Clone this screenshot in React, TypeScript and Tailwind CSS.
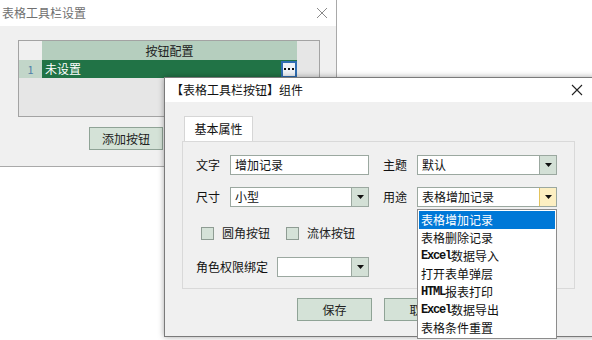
import React from 'react';

const cjk = { fontFamily: '"Noto Sans CJK SC", "Noto Sans", sans-serif' };

const Arrow = () => (
  <svg width="7" height="4" viewBox="0 0 7 4">
    <path d="M0 0H7L3.5 4Z" fill="#111" />
  </svg>
);

const Select = ({ value, width, yellow }: { value: string; width: string; yellow?: boolean }) => (
  <div className={`flex h-[20px] ${width} border border-[#9ba8a0] bg-white`}>
    <div className="flex-1 px-[4px] leading-[18px] text-[12px] text-[#111]">{value}</div>
    <div
      className={`flex w-[17px] items-center justify-center border-l ${
        yellow ? 'border-[#e3c35c] bg-[#fcefc2]' : 'border-[#9ba8a0] bg-[#d3e0d6]'
      }`}
    >
      <Arrow />
    </div>
  </div>
);

const Check = ({ label }: { label: string }) => (
  <div className="flex items-center">
    <div className="h-[13px] w-[13px] border border-[#8e9c93] bg-[#d5e2d8]" />
    <span className="ml-[8px] text-[12px] text-[#222]">{label}</span>
  </div>
);

const Mono = ({ children }: { children: React.ReactNode }) => (
  <span className="text-[12px] font-semibold tracking-[-1.2px]" style={{ fontFamily: '"Liberation Mono", monospace' }}>
    {children}
  </span>
);

const options: React.ReactNode[] = [
  '表格增加记录',
  '表格删除记录',
  <><Mono>Excel</Mono>数据导入</>,
  '打开表单弹层',
  <><Mono>HTML</Mono>报表打印</>,
  <><Mono>Excel</Mono>数据导出</>,
  '表格条件重置',
];

export default function App() {
  return (
    <div className="relative h-[340px] w-[592px] overflow-hidden bg-white" style={cjk}>
      {/* back window */}
      <div className="absolute left-0 top-0 flex h-[167px] w-[337px] flex-col border-b border-r border-[#a9a9a9] bg-[#f0f0f0]">
        <div className="flex h-[26px] items-center justify-between bg-white pl-[2px] pr-[8px]">
          <span className="text-[12px] text-[#707070]">表格工具栏设置</span>
          <svg width="12" height="12" viewBox="0 0 12 12">
            <path d="M1 1L11 11M11 1L1 11" stroke="#8a8a8a" strokeWidth="1" />
          </svg>
        </div>
        <div className="ml-[18px] mt-[14px] flex h-[77px] w-[302px] flex-col border border-[#a3a3a3] bg-[#e6e6e6]">
          <div className="flex h-[19px]">
            <div className="w-[23px] bg-[#f0f0f0]" />
            <div className="flex w-[255px] items-center justify-center bg-[#b5cebe] text-[12px] text-[#222]">按钮配置</div>
            <div className="flex-1 bg-[#e6e6e6]" />
          </div>
          <div className="flex h-[18px]">
            <div className="flex w-[23px] items-center justify-center bg-[#c2d6c9] text-[11px] text-[#4f7fa8]">1</div>
            <div className="flex w-[255px] items-center justify-between bg-[#217346] pl-[3px] text-[12px] text-white">
              <span>未设置</span>
              <div className="flex h-[17px] w-[16px] items-center justify-center border-2 border-[#2f6db2] bg-[#eef2f7]">
                <svg width="10" height="4" viewBox="0 0 10 4">
                  <rect x="0" y="1" width="2" height="2" fill="#111" />
                  <rect x="4" y="1" width="2" height="2" fill="#111" />
                  <rect x="8" y="1" width="2" height="2" fill="#111" />
                </svg>
              </div>
            </div>
            <div className="flex-1" />
          </div>
        </div>
        <div className="ml-[89px] mt-[10px] flex h-[23px] w-[74px] items-center justify-center border border-[#8fa396] bg-[#d4e2d7] text-[12px] text-[#222]">
          添加按钮
        </div>
      </div>

      {/* front dialog */}
      <div className="absolute left-[164px] top-[77px] flex h-[260px] w-[432px] flex-col border border-[#7a7a7a] bg-[#f0f0f0] shadow-[0_0_6px_rgba(0,0,0,0.35)]">
        <div className="flex h-[24px] items-center justify-between bg-white pl-[6px] pr-[12px]">
          <span className="text-[12px] text-[#111]">【表格工具栏按钮】组件</span>
          <svg width="12" height="12" viewBox="0 0 12 12">
            <path d="M1 1L11 11M11 1L1 11" stroke="#222" strokeWidth="1.1" />
          </svg>
        </div>
        <div className="ml-[17px] mt-[14px] flex">
          <div className="ml-[2px] flex h-[25px] w-[69px] items-center justify-center border-x border-t border-[#d6d6d6] bg-white text-[12px] text-[#111]">
            基本属性
          </div>
        </div>
        <div className="ml-[17px] flex h-[148px] w-[393px] flex-col border border-[#d9d9d9] bg-[#f0f0f0] px-[13px] pt-[13px]">
          <div className="flex items-center">
            <span className="w-[34px] text-[12px] text-[#111]">文字</span>
            <div className="h-[20px] w-[139px] border border-[#9ba8a0] bg-white px-[4px] text-[12px] leading-[18px] text-[#111]">增加记录</div>
            <span className="ml-[14px] w-[34px] text-[12px] text-[#111]">主题</span>
            <Select value="默认" width="w-[140px]" />
          </div>
          <div className="mt-[12px] flex items-center">
            <span className="w-[34px] text-[12px] text-[#111]">尺寸</span>
            <Select value="小型" width="w-[139px]" />
            <span className="ml-[14px] w-[34px] text-[12px] text-[#111]">用途</span>
            <Select value="表格增加记录" width="w-[140px]" yellow />
          </div>
          <div className="ml-[5px] mt-[17px] flex items-center gap-[16px]">
            <Check label="圆角按钮" />
            <Check label="流体按钮" />
          </div>
          <div className="mt-[15px] flex items-center">
            <span className="w-[81px] text-[12px] text-[#111]">角色权限绑定</span>
            <Select value="" width="w-[92px]" />
          </div>
        </div>
        <div className="ml-[132px] mt-[9px] flex gap-[12px]">
          <div className="flex h-[23px] w-[75px] items-center justify-center border border-[#8fa396] bg-[#d4e2d7] text-[12px] text-[#222]">保存</div>
          <div className="flex h-[23px] w-[75px] items-center justify-center border border-[#8fa396] bg-[#d4e2d7] text-[12px] text-[#222]">取消</div>
        </div>
      </div>

      {/* dropdown list */}
      <div className="absolute left-[417px] top-[209px] w-[140px] border border-[#8c8c8c] bg-white p-[1px] text-[12px]">
        {options.map((o, i) => (
          <div
            key={i}
            className={`flex h-[18px] items-center pl-[2px] ${i === 0 ? 'bg-[#0078d7] text-white' : 'text-[#111]'}`}
          >
            {o}
          </div>
        ))}
      </div>
    </div>
  );
}
